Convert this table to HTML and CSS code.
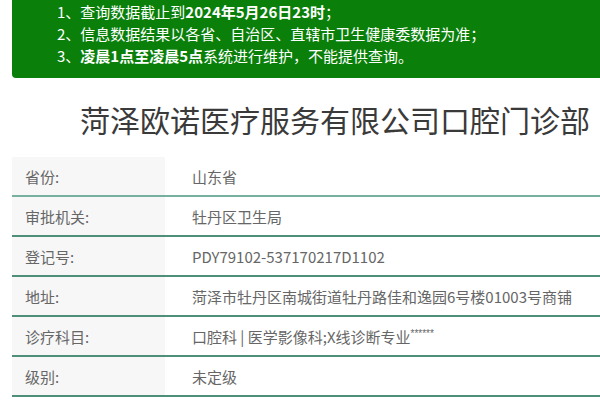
FILE: index.html
```html
<!DOCTYPE html>
<html lang="zh-CN">
<head>
<meta charset="utf-8">
<link rel="stylesheet" href="styles.css">
</head>
<body>
<div class="notice">
  <p>1、查询数据截止到<b>2024年5月26日23时</b>；</p>
  <p>2、信息数据结果以各省、自治区、直辖市卫生健康委数据为准；</p>
  <p>3、<b>凌晨1点至凌晨5点</b>系统进行维护，不能提供查询。</p>
</div>
<h1 class="title">菏泽欧诺医疗服务有限公司口腔门诊部</h1>
<div class="table">
  <div class="row"><div class="label">省份:</div><div class="value">山东省</div></div>
  <div class="row"><div class="label">审批机关:</div><div class="value">牡丹区卫生局</div></div>
  <div class="row"><div class="label">登记号:</div><div class="value">PDY79102-537170217D1102</div></div>
  <div class="row"><div class="label">地址:</div><div class="value">菏泽市牡丹区南城街道牡丹路佳和逸园6号楼01003号商铺</div></div>
  <div class="row"><div class="label">诊疗科目:</div><div class="value">口腔科 | 医学影像科;X线诊断专业<span class="stars">******</span></div></div>
  <div class="row"><div class="label">级别:</div><div class="value">未定级</div></div>
</div>
</body>
</html>
```
FILE: styles.css
```css
html, body {
  margin: 0;
  padding: 0;
  background: #fff;
  font-family: "Noto Sans CJK SC", "Noto Sans", sans-serif;
  overflow: hidden;
}
.notice {
  margin-left: 12px;
  background: #0a800a;
  color: #fff;
  padding: 1px 0 11px 45px;
  border-bottom-left-radius: 4px;
  font-size: 15px;
  line-height: 22px;
}
.notice p {
  margin: 0;
  white-space: nowrap;
}
.notice b {
  font-weight: 700;
}
.title {
  margin: 0;
  height: 79px;
  display: flex;
  align-items: center;
  padding-left: 80px;
  padding-top: 2px;
  box-sizing: border-box;
  font-size: 30px;
  font-weight: 400;
  color: #3a3a3a;
  white-space: nowrap;
}
.table {
  margin-left: 12px;
}
.row {
  display: flex;
  height: 40px;
  border-bottom: 2px solid #4f8e78;
  box-sizing: border-box;
  font-size: 15px;
}
.row:first-child {
  border-bottom-color: #78b0a0;
}
.label {
  width: 153px;
  flex: none;
  background: #f7f7f7;
  color: #666;
  padding-left: 13px;
  box-sizing: border-box;
  display: flex;
  align-items: center;
}
.value {
  padding-left: 27px;
  color: #666;
  display: flex;
  align-items: center;
  white-space: nowrap;
}
.stars {
  font-family: "Liberation Sans", sans-serif;
  font-size: 10px;
  line-height: 10px;
  align-self: flex-start;
  margin-top: 12px;
}
```
